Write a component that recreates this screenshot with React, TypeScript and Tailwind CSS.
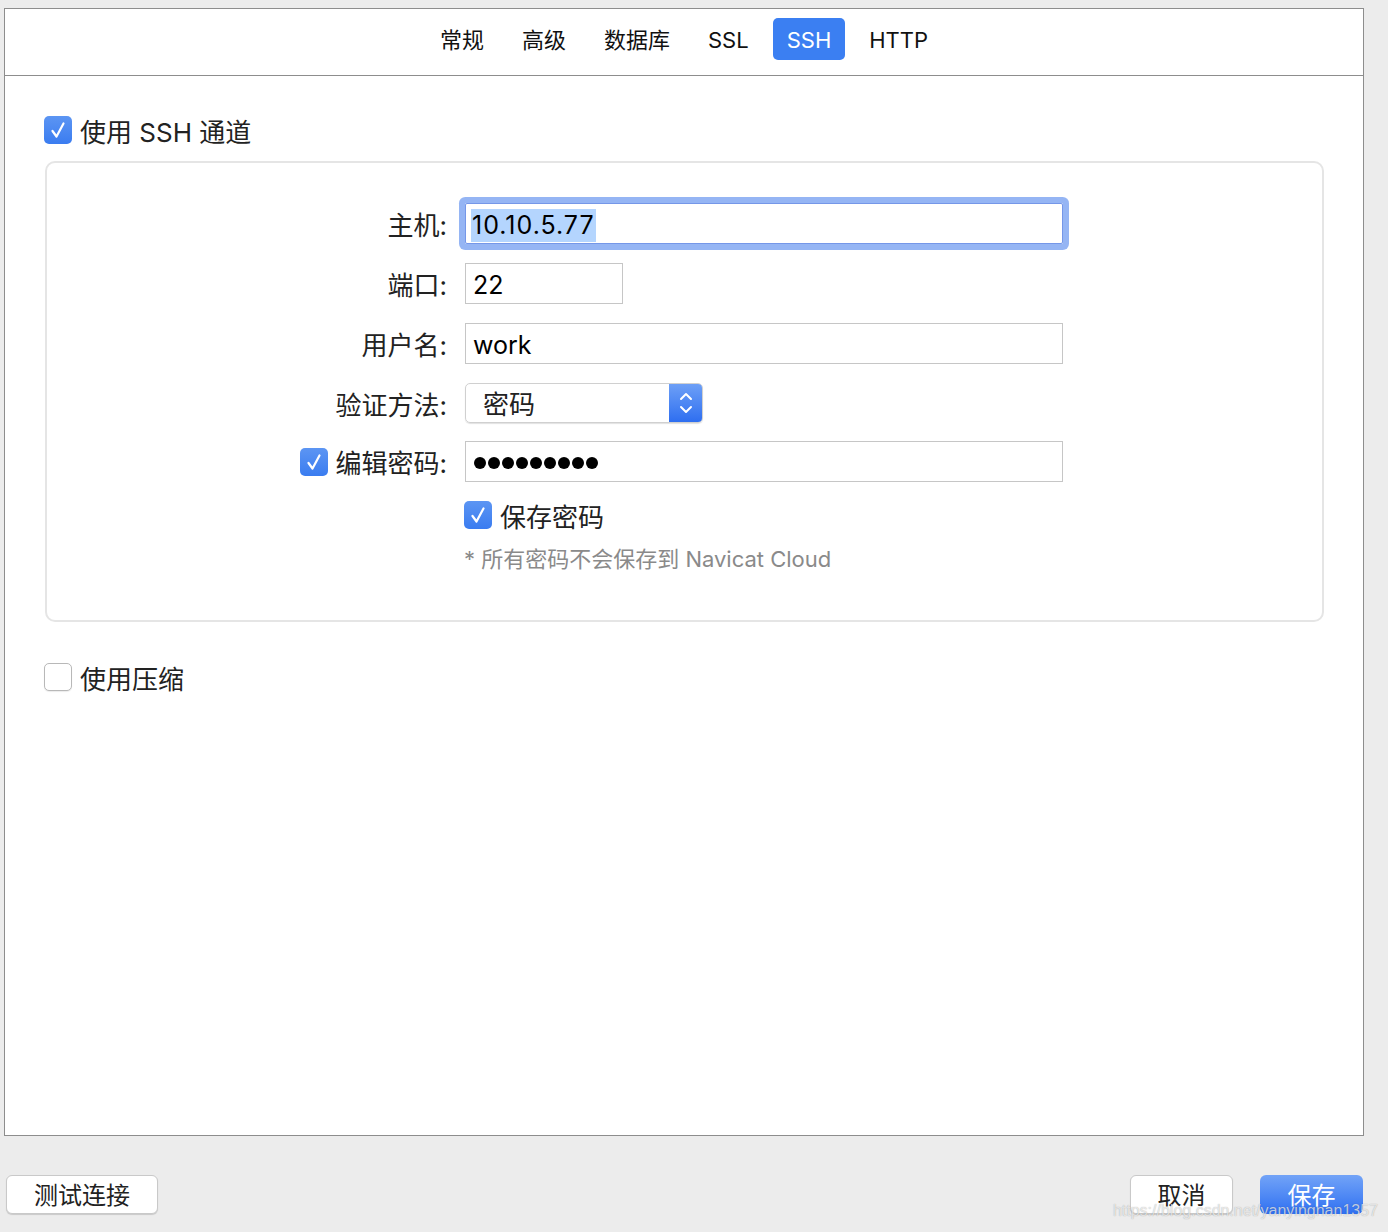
import { ReactNode } from 'react'

const font = {
  fontFamily: 'Inter, "Noto Sans CJK SC", sans-serif',
}

function Check({ checked }: { checked: boolean }) {
  if (!checked) {
    return (
      <span className="flex h-[28px] w-[28px] shrink-0 rounded-[5px] border border-[#b8b8b8] bg-white shadow-[0_1px_1px_rgba(0,0,0,0.08)]" />
    )
  }
  return (
    <span className="flex h-[28px] w-[28px] shrink-0 items-center justify-center rounded-[5px] bg-gradient-to-b from-[#5c95f3] to-[#3a7cf0]">
      <svg width="22" height="22" viewBox="0 0 22 22" fill="none">
        <path
          d="M5.5 12 L9.5 17.5 L16.5 4.5"
          stroke="white"
          strokeWidth="2.2"
          strokeLinecap="round"
          strokeLinejoin="round"
        />
      </svg>
    </span>
  )
}

function Row({
  label,
  height,
  children,
}: {
  label: ReactNode
  height: string
  children: ReactNode
}) {
  return (
    <div className={`flex items-start ${height}`}>
      <div className="flex h-[41px] w-[400px] items-center justify-end text-[26px] text-[#222]">
        {label}
      </div>
      <div className="ml-[18px]">{children}</div>
    </div>
  )
}

const tabs = ['常规', '高级', '数据库', 'SSL', 'SSH', 'HTTP']

export default function App() {
  return (
    <div
      className="relative h-[1232px] w-[1388px] bg-[#ececec] pl-[4px] pt-[8px] text-black"
      style={font}
    >
      <div className="flex h-[1128px] w-[1360px] flex-col border border-[#8d8d8d] bg-white">
        <div className="flex h-[67px] shrink-0 items-start justify-center gap-[10px] border-b border-[#8d8d8d] pt-[9px]">
          {tabs.map((t) => (
            <div
              key={t}
              className={
                t === 'SSH'
                  ? 'flex h-[42px] items-center rounded-[5px] bg-[#3b7ff2] px-[14px] pt-[2px] text-[22px] text-white'
                  : 'flex h-[42px] items-center px-[14px] pt-[2px] text-[22px] text-[#111]'
              }
            >
              {t}
            </div>
          ))}
        </div>

        <div className="flex flex-col pl-[40px] pr-[39px] pt-[40px]">
          <label className="-ml-px flex h-[28px] items-center gap-[8px] text-[26px] text-[#222]">
            <Check checked />
            <span className="relative top-[2px]">使用 SSH 通道</span>
          </label>

          <div className="mt-[17px] flex h-[461px] flex-col rounded-[10px] border-2 border-[#e5e5e5] pt-[40px]">
            <Row label={<span className="relative top-[2px]">主机:</span>} height="h-[60px]">
              <div className="flex h-[41px] w-[598px] items-center rounded-[2px] border border-[#7597e8] pl-[5px] text-[25px] shadow-[0_0_0_6px_#95b5f4]">
                <span className="relative top-[2px] bg-[#b4d5fe] px-px leading-[33px] tracking-[1px]">10.10.5.77</span>
              </div>
            </Row>
            <Row label={<span className="relative top-[2px]">端口:</span>} height="h-[60px]">
              <div className="flex h-[41px] w-[158px] items-center border border-[#c6c6c6] pl-[7px] text-[25px]">
                <span className="relative top-[2px]">22</span>
              </div>
            </Row>
            <Row label={<span className="relative top-[2px]">用户名:</span>} height="h-[60px]">
              <div className="flex h-[41px] w-[598px] items-center border border-[#c6c6c6] pl-[7px] text-[25px]">
                <span className="relative top-[2px]">work</span>
              </div>
            </Row>
            <Row label={<span className="relative top-[2px]">验证方法:</span>} height="h-[58px]">
              <div className="flex h-[40px] w-[238px] overflow-hidden rounded-[5px] border border-[#d0d0d0] shadow-[0_1px_1px_rgba(0,0,0,0.12)]">
                <div className="flex flex-1 items-center pl-[17px] text-[26px] text-[#222]">
                  <span className="relative top-[1px]">密码</span>
                </div>
                <div className="flex w-[33px] items-center justify-center bg-gradient-to-b from-[#6d9ff6] to-[#2e6ef0]">
                  <svg width="16" height="26" viewBox="0 0 16 26" fill="none">
                    <path
                      d="M3 9 L8 4 L13 9"
                      stroke="white"
                      strokeWidth="2"
                      strokeLinecap="round"
                      strokeLinejoin="round"
                    />
                    <path
                      d="M3 17 L8 22 L13 17"
                      stroke="white"
                      strokeWidth="2"
                      strokeLinecap="round"
                      strokeLinejoin="round"
                    />
                  </svg>
                </div>
              </div>
            </Row>
            <Row
              label={
                <span className="flex items-center gap-[8px]">
                  <Check checked />
                  <span className="relative top-[2px]">编辑密码:</span>
                </span>
              }
              height="h-[60px]"
            >
              <div className="flex h-[41px] w-[598px] items-center gap-[2px] border border-[#c6c6c6] pl-[8px] pt-[2px]">
                {Array.from({ length: 9 }).map((_, i) => (
                  <span key={i} className="h-[12px] w-[12px] rounded-full bg-black" />
                ))}
              </div>
            </Row>
            <label className="ml-[417px] flex h-[28px] items-center gap-[8px] text-[26px] text-[#222]">
              <Check checked />
              <span className="relative top-[2px]">保存密码</span>
            </label>
            <div className="ml-[417px] mt-[15px] text-[22px] leading-[30px] text-[#8a8a8a]">
              * 所有密码不会保存到 Navicat Cloud
            </div>
          </div>

          <label className="-ml-px mt-[41px] flex h-[28px] items-center gap-[8px] text-[26px] text-[#222]">
            <Check checked={false} />
            <span className="relative top-[2px]">使用压缩</span>
          </label>
        </div>
      </div>

      <div className="mt-[39px] flex w-[1359px] items-start justify-between pl-[2px]">
        <button className="flex h-[39px] w-[152px] items-center justify-center rounded-[6px] border border-[#c9c9c9] bg-white pt-[2px] text-[24px] text-[#222] shadow-[0_1px_1px_rgba(0,0,0,0.15)]">
          测试连接
        </button>
        <div className="flex gap-[27px]">
          <button className="flex h-[39px] w-[103px] items-center justify-center rounded-[6px] border border-[#c9c9c9] bg-white pt-[2px] text-[24px] text-[#222] shadow-[0_1px_1px_rgba(0,0,0,0.15)]">
            取消
          </button>
          <button className="flex h-[39px] w-[103px] items-center justify-center rounded-[6px] bg-gradient-to-b from-[#72a3f7] to-[#2f6ff1] pt-[2px] text-[24px] text-white">
            保存
          </button>
        </div>
      </div>

      <div
        className="absolute bottom-[9px] right-[10px] text-[16px] text-white/70 [text-shadow:0_0_1px_rgba(0,0,0,0.35)]"
        style={{ fontFamily: '"Liberation Sans", sans-serif' }}
      >
        https://blog.csdn.net/yanyingnan1357
      </div>
    </div>
  )
}
